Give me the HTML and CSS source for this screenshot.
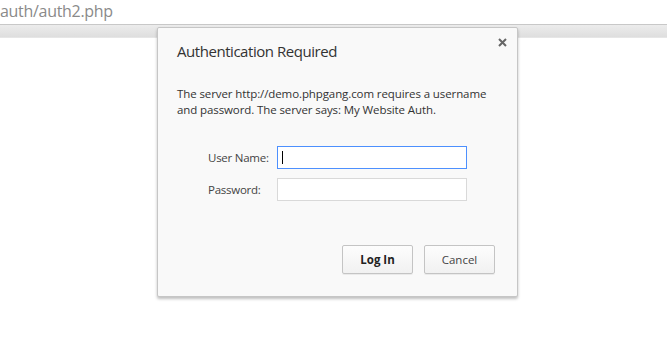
FILE: index.html
```html
<!DOCTYPE html>
<html>
<head lang="en">
    <meta charset="UTF-8">
    <title>auth2.php</title>
    <link rel="stylesheet" href="styles.css">
</head>
<body>
<div class="page">
    <div class="url">auth/auth2.php</div>
    <div class="toolbar"></div>
</div>
<div class="dialog">
    <svg class="close" width="9" height="9" viewBox="0 0 9 9">
        <path d="M1 1L8 8M8 1L1 8" stroke="#666" stroke-width="2"/>
    </svg>
    <h1 class="title">Authentication Required</h1>
    <p class="message">The server http://demo.phpgang.com requires a username and password. The server says: My Website Auth.</p>
    <form class="fields">
        <div class="row">
            <label for="user">User Name:</label>
            <input type="text" id="user" class="focus">
        </div>
        <div class="row">
            <label for="pass">Password:</label>
            <input type="password" id="pass">
        </div>
        <div class="buttons">
            <button type="button" class="primary">Log In</button>
            <button type="button">Cancel</button>
        </div>
    </form>
</div>
</body>
</html>
```

FILE: styles.css
```css
*{
    padding: 0;
    margin: 0;
    box-sizing: border-box;
}
body{
    background-color: #fff;
    font-family: "Open Sans", "Noto Sans", sans-serif;
    color: #333;
}
.url{
    height: 24px;
    font: 16px/22px "Open Sans", sans-serif;
    color: #8a8a8a;
    letter-spacing: -0.3px;
}
.toolbar{
    height: 14px;
    border-top: 1px solid #c8c8c8;
    border-bottom: 1px solid #e6e6e6;
    background: linear-gradient(#ececec, #dedede);
}
.dialog{
    position: absolute;
    left: 157px;
    top: 27px;
    width: 361px;
    height: 270px;
    background-color: #f9f9f9;
    border: 1px solid #c6c6c6;
    border-radius: 2px;
    box-shadow: 0 2px 3px rgba(0,0,0,0.25);
    padding: 13px 19px 0 19px;
}
.close{
    position: absolute;
    right: 10px;
    top: 10px;
}
.title{
    font: 15px/20px "Open Sans", sans-serif;
    color: #333;
    letter-spacing: -0.45px;
}
.message{
    margin-top: 25px;
    font: 11.5px/16px "Open Sans", sans-serif;
    letter-spacing: -0.1px;
    color: #333;
    width: 315px;
}
.fields{
    margin-top: 28px;
}
.row{
    display: flex;
    align-items: center;
    height: 23px;
    margin-bottom: 9px;
}
.row label{
    width: 100px;
    padding-left: 31px;
    font: 11.5px "Open Sans", sans-serif;
    letter-spacing: -0.25px;
    color: #444;
}
.row input{
    width: 190px;
    height: 23px;
    border: 1px solid #d9d9d9;
    background-color: #fff;
    outline: none;
}
.row input.focus{
    border-color: #4d90fe;
    background: #fff linear-gradient(#000, #000) no-repeat 4px 4px / 1px 13px;
}
.buttons{
    display: flex;
    justify-content: flex-end;
    gap: 11px;
    margin-top: 44px;
    padding-right: 3px;
}
.buttons button{
    width: 71px;
    height: 29px;
    border: 1px solid #c4c4c4;
    border-radius: 2px;
    background: linear-gradient(#fdfdfd, #f1f1f1);
    font: 11.5px "Open Sans", sans-serif;
    color: #444;
    box-shadow: 0 1px 0 rgba(0,0,0,0.06);
}
.buttons .primary{
    font-weight: bold;
    color: #222;
}
```
